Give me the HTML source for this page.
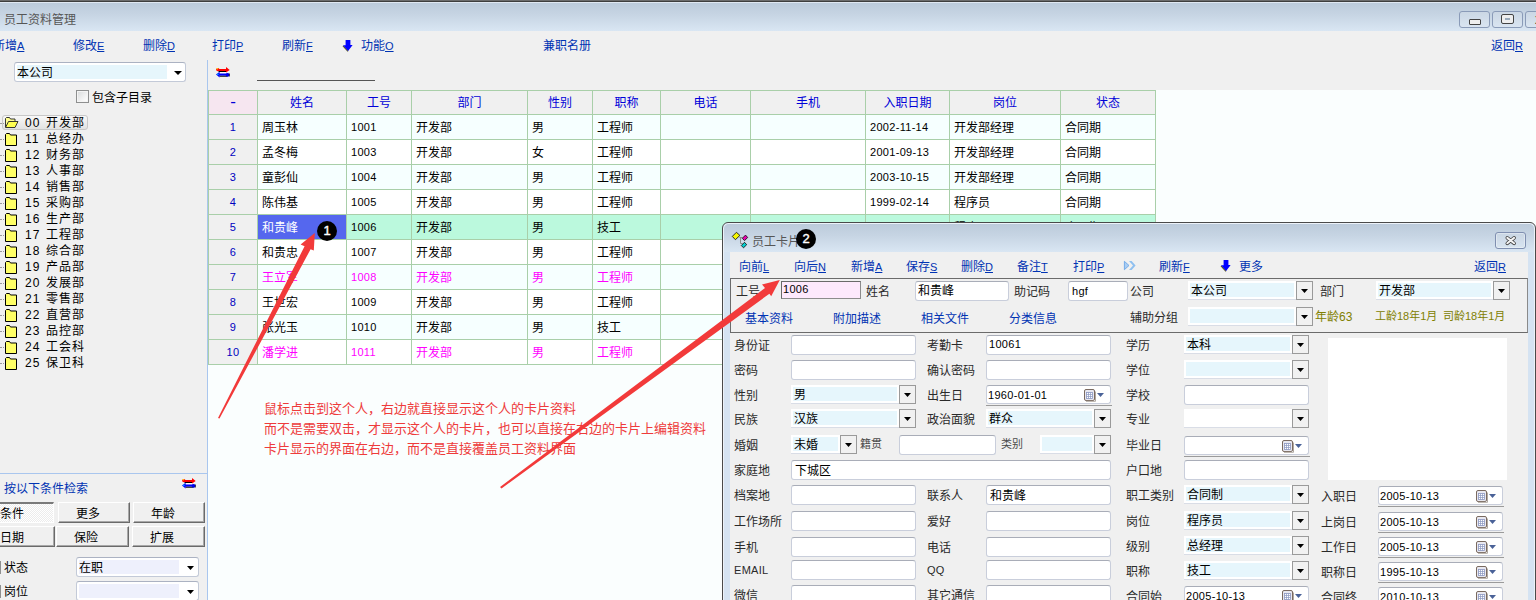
<!DOCTYPE html>
<html lang="zh-CN"><head><meta charset="utf-8"><title>员工资料管理</title>
<style>
html,body{margin:0;padding:0}
body{width:1536px;height:600px;overflow:hidden;position:relative;background:#f0f0f0;
font-family:"Liberation Sans","Noto Sans CJK SC",sans-serif;font-size:12px;line-height:12px;color:#000}
.a{position:absolute}
.t{position:absolute;white-space:nowrap;font-size:12px;line-height:12px}
.t u{text-decoration:underline;text-underline-offset:.5px;text-decoration-thickness:1px;font-size:11px}
.c{text-align:center}
.n{font-size:11px;letter-spacing:.3px}
.y{font-size:13px;line-height:13px}
.tr{letter-spacing:1px}
.tn{display:inline-block;width:21px}
.in{box-sizing:border-box;border:1px solid #c9cedb;border-top-color:#a9adb8;border-radius:3px}
.bd{width:20px;height:20px;border-radius:10px;background:#000;color:#fff;font:13px/20px "Liberation Sans",sans-serif;text-align:center;-webkit-text-stroke:.4px #fff}
svg{display:block;overflow:visible}
</style></head>
<body>
<div class="a " style="left:0px;top:0px;width:1536px;height:1px;background:#6c6c6c"></div>
<div class="a " style="left:0px;top:1px;width:1536px;height:1px;background:#3e3e3e"></div>
<div class="a " style="left:0px;top:2px;width:1536px;height:1px;background:#e0e8f2"></div>
<div class="a " style="left:0px;top:3px;width:1536px;height:28px;background:linear-gradient(#bccbdb,#c6d4e3 40%,#d9e6f3)"></div>
<div class="t" style="left:4px;top:14px;color:#565656;">员工资料管理</div>
<div class="a " style="left:1459px;top:11px;width:31px;height:17px;border:1px solid #8a9bb8;border-radius:3px;box-sizing:border-box;background:rgba(255,255,255,.12)"><div class="a" style="left:9px;top:7px;width:10px;height:4px;border:1px solid #444;border-radius:1px;background:#eee;box-sizing:content-box"></div></div>
<div class="a " style="left:1492px;top:11px;width:31px;height:17px;border:1px solid #8a9bb8;border-radius:3px;box-sizing:border-box;background:rgba(255,255,255,.12)"><div class="a" style="left:9px;top:3px;width:5px;height:2px;border:3px solid #eee;outline:1px solid #444;border-radius:1px;background:#9ab"></div></div>
<div class="a " style="left:1525px;top:11px;width:31px;height:17px;border:1px solid #8a9bb8;border-radius:3px;box-sizing:border-box;background:rgba(255,255,255,.12)"><div class="a" style="left:9px;top:3px;font:bold 11px/11px 'Liberation Sans',sans-serif;color:#333">X</div></div>
<div class="t" style="left:-7px;top:40px;color:#0033b3;">新增<u>A</u></div>
<div class="t" style="left:73px;top:40px;color:#0033b3;">修改<u>E</u></div>
<div class="t" style="left:143px;top:40px;color:#0033b3;">删除<u>D</u></div>
<div class="t" style="left:212px;top:40px;color:#0033b3;">打印<u>P</u></div>
<div class="t" style="left:282px;top:40px;color:#0033b3;">刷新<u>F</u></div>
<svg class="a" style="left:343px;top:40px" width="11" height="12" viewBox="0 0 11 12"><path d="M0 5.800l5 5.600" stroke="#5a5a20" stroke-width="1.200" fill="none"/><path d="M2.600 0h4.800v5h2.200L5.100 11 0 5.200h2.600z" fill="#0000ff"/></svg>
<div class="t" style="left:361px;top:40px;color:#0033b3;">功能<u>O</u></div>
<div class="t" style="left:543px;top:40px;color:#0033b3;">兼职名册</div>
<div class="t" style="left:1491px;top:40px;color:#0033b3;">返回<u>R</u></div>
<div class="a " style="left:14px;top:62px;width:172px;height:20px;background:#fff;border:1px solid #c3cad8;border-top-color:#abb2c2;border-radius:3px;box-sizing:border-box"></div>
<div class="a " style="left:17px;top:65px;width:150px;height:14px;background:#e6f6fc"></div>
<div class="t" style="left:17px;top:67px;">本公司</div>
<svg class="a" style="left:174px;top:71px" width="8" height="4" viewBox="0 0 8 4"><path d="M0 0h8L4 4z" fill="#000"/></svg>
<div class="a " style="left:76px;top:90px;width:13px;height:13px;box-sizing:border-box;border:1px solid #8e8f8f;background:linear-gradient(135deg,#d8dadb,#f6f6f6 70%,#fff);box-shadow:inset 0 0 0 1px #f4f4f4"></div>
<div class="t" style="left:92px;top:92px;">包含子目录</div>
<div class="a " style="left:2px;top:115px;width:86px;height:15px;border:1px solid #c8c8c8;border-radius:3px;box-sizing:border-box;background:linear-gradient(#f8f8f8,#e2e2e2)"></div>
<div class="a" style="left:0;top:123px;width:4px;height:0;border-top:1px dotted #9a9a9a"></div>
<svg class="a" style="left:5px;top:117px" width="14" height="12" viewBox="0 0 14 12"><path d="M.5 10V1.500l1-1h3l1 1.500h4.500v2" fill="#ffff90" stroke="#222" stroke-width=".9"/><path d="M.5 10.500l3-6h9.500l-3 6z" fill="#ffff50" stroke="#222" stroke-width=".9" stroke-linejoin="round"/></svg>
<div class="t tr" style="left:25px;top:117px;"><span class="tn">00</span>开发部</div>
<div class="a" style="left:0;top:139px;width:4px;height:0;border-top:1px dotted #9a9a9a"></div>
<svg class="a" style="left:5px;top:133px" width="13" height="13" viewBox="0 0 13 13"><path d="M.5 12.5V1.5l1-1h3l1 1.5h6v10.5z" fill="#ffff66" stroke="#000"/></svg>
<div class="t tr" style="left:25px;top:133px;"><span class="tn">11</span>总经办</div>
<div class="a" style="left:0;top:155px;width:4px;height:0;border-top:1px dotted #9a9a9a"></div>
<svg class="a" style="left:5px;top:149px" width="13" height="13" viewBox="0 0 13 13"><path d="M.5 12.5V1.5l1-1h3l1 1.5h6v10.5z" fill="#ffff66" stroke="#000"/></svg>
<div class="t tr" style="left:25px;top:149px;"><span class="tn">12</span>财务部</div>
<div class="a" style="left:0;top:171px;width:4px;height:0;border-top:1px dotted #9a9a9a"></div>
<svg class="a" style="left:5px;top:165px" width="13" height="13" viewBox="0 0 13 13"><path d="M.5 12.5V1.5l1-1h3l1 1.5h6v10.5z" fill="#ffff66" stroke="#000"/></svg>
<div class="t tr" style="left:25px;top:165px;"><span class="tn">13</span>人事部</div>
<div class="a" style="left:0;top:187px;width:4px;height:0;border-top:1px dotted #9a9a9a"></div>
<svg class="a" style="left:5px;top:181px" width="13" height="13" viewBox="0 0 13 13"><path d="M.5 12.5V1.5l1-1h3l1 1.5h6v10.5z" fill="#ffff66" stroke="#000"/></svg>
<div class="t tr" style="left:25px;top:181px;"><span class="tn">14</span>销售部</div>
<div class="a" style="left:0;top:203px;width:4px;height:0;border-top:1px dotted #9a9a9a"></div>
<svg class="a" style="left:5px;top:197px" width="13" height="13" viewBox="0 0 13 13"><path d="M.5 12.5V1.5l1-1h3l1 1.5h6v10.5z" fill="#ffff66" stroke="#000"/></svg>
<div class="t tr" style="left:25px;top:197px;"><span class="tn">15</span>采购部</div>
<div class="a" style="left:0;top:219px;width:4px;height:0;border-top:1px dotted #9a9a9a"></div>
<svg class="a" style="left:5px;top:213px" width="13" height="13" viewBox="0 0 13 13"><path d="M.5 12.5V1.5l1-1h3l1 1.5h6v10.5z" fill="#ffff66" stroke="#000"/></svg>
<div class="t tr" style="left:25px;top:213px;"><span class="tn">16</span>生产部</div>
<div class="a" style="left:0;top:235px;width:4px;height:0;border-top:1px dotted #9a9a9a"></div>
<svg class="a" style="left:5px;top:229px" width="13" height="13" viewBox="0 0 13 13"><path d="M.5 12.5V1.5l1-1h3l1 1.5h6v10.5z" fill="#ffff66" stroke="#000"/></svg>
<div class="t tr" style="left:25px;top:229px;"><span class="tn">17</span>工程部</div>
<div class="a" style="left:0;top:251px;width:4px;height:0;border-top:1px dotted #9a9a9a"></div>
<svg class="a" style="left:5px;top:245px" width="13" height="13" viewBox="0 0 13 13"><path d="M.5 12.5V1.5l1-1h3l1 1.5h6v10.5z" fill="#ffff66" stroke="#000"/></svg>
<div class="t tr" style="left:25px;top:245px;"><span class="tn">18</span>综合部</div>
<div class="a" style="left:0;top:267px;width:4px;height:0;border-top:1px dotted #9a9a9a"></div>
<svg class="a" style="left:5px;top:261px" width="13" height="13" viewBox="0 0 13 13"><path d="M.5 12.5V1.5l1-1h3l1 1.5h6v10.5z" fill="#ffff66" stroke="#000"/></svg>
<div class="t tr" style="left:25px;top:261px;"><span class="tn">19</span>产品部</div>
<div class="a" style="left:0;top:283px;width:4px;height:0;border-top:1px dotted #9a9a9a"></div>
<svg class="a" style="left:5px;top:277px" width="13" height="13" viewBox="0 0 13 13"><path d="M.5 12.5V1.5l1-1h3l1 1.5h6v10.5z" fill="#ffff66" stroke="#000"/></svg>
<div class="t tr" style="left:25px;top:277px;"><span class="tn">20</span>发展部</div>
<div class="a" style="left:0;top:299px;width:4px;height:0;border-top:1px dotted #9a9a9a"></div>
<svg class="a" style="left:5px;top:293px" width="13" height="13" viewBox="0 0 13 13"><path d="M.5 12.5V1.5l1-1h3l1 1.5h6v10.5z" fill="#ffff66" stroke="#000"/></svg>
<div class="t tr" style="left:25px;top:293px;"><span class="tn">21</span>零售部</div>
<div class="a" style="left:0;top:315px;width:4px;height:0;border-top:1px dotted #9a9a9a"></div>
<svg class="a" style="left:5px;top:309px" width="13" height="13" viewBox="0 0 13 13"><path d="M.5 12.5V1.5l1-1h3l1 1.5h6v10.5z" fill="#ffff66" stroke="#000"/></svg>
<div class="t tr" style="left:25px;top:309px;"><span class="tn">22</span>直营部</div>
<div class="a" style="left:0;top:331px;width:4px;height:0;border-top:1px dotted #9a9a9a"></div>
<svg class="a" style="left:5px;top:325px" width="13" height="13" viewBox="0 0 13 13"><path d="M.5 12.5V1.5l1-1h3l1 1.5h6v10.5z" fill="#ffff66" stroke="#000"/></svg>
<div class="t tr" style="left:25px;top:325px;"><span class="tn">23</span>品控部</div>
<div class="a" style="left:0;top:347px;width:4px;height:0;border-top:1px dotted #9a9a9a"></div>
<svg class="a" style="left:5px;top:341px" width="13" height="13" viewBox="0 0 13 13"><path d="M.5 12.5V1.5l1-1h3l1 1.5h6v10.5z" fill="#ffff66" stroke="#000"/></svg>
<div class="t tr" style="left:25px;top:341px;"><span class="tn">24</span>工会科</div>
<div class="a" style="left:0;top:363px;width:4px;height:0;border-top:1px dotted #9a9a9a"></div>
<svg class="a" style="left:5px;top:357px" width="13" height="13" viewBox="0 0 13 13"><path d="M.5 12.5V1.5l1-1h3l1 1.5h6v10.5z" fill="#ffff66" stroke="#000"/></svg>
<div class="t tr" style="left:25px;top:357px;"><span class="tn">25</span>保卫科</div>
<div class="a " style="left:207px;top:60px;width:1px;height:540px;background:#a9c6ee"></div>
<div class="a " style="left:0px;top:473px;width:207px;height:1px;background:#a9c6ee"></div>
<div class="t" style="left:4px;top:483px;color:#0033b3;">按以下条件检索</div>
<svg class="a" style="left:182px;top:478px" width="14" height="11" viewBox="0 0 14 11"><rect x="2.500" y="4" width="8.500" height="1" fill="#000"/><rect x="3" y="5" width="7.500" height="1.500" fill="#fff"/><rect x="3.500" y="8.500" width="8" height="1.200" fill="#000"/><circle cx="1.800" cy="2.600" r="1.700" fill="#ff0000"/><rect x="1" y="2" width="10" height="2" fill="#ff0000"/><path d="M10 0l3.700 2.900L10 5.600z" fill="#ff0000"/><path d="M3.600 4.800L0 7.500l3.600 3z" fill="#0000ff"/><rect x="2.500" y="6.500" width="9" height="2" fill="#0000ff"/><circle cx="11.600" cy="7.800" r="1.900" fill="#0000ee"/><path d="M13.300 6.500v3" stroke="#000" stroke-width=".8"/><circle cx="1.300" cy="1.700" r=".7" fill="#ffee00"/><circle cx="1.900" cy="7.300" r=".7" fill="#00e0ff"/></svg>
<div class="a " style="left:-20px;top:502px;width:74px;height:21px;box-sizing:border-box;border:1px solid;border-top-width:2px;border-color:#7a7a7a #fff #fff #7a7a7a;background:repeating-conic-gradient(#fff 0 25%,#ececec 0 50%) 0 0/2px 2px"></div>
<div class="t" style="left:0px;top:508px;">条件</div>
<div class="a " style="left:58px;top:502px;width:72px;height:21px;box-sizing:border-box;border:1px solid;border-color:#fff #6a6a6a #6a6a6a #fff;box-shadow:inset -1px -1px 0 #a8a8a8;background:#f0f0f0"></div>
<div class="t" style="left:76px;top:508px;">更多</div>
<div class="a " style="left:133px;top:502px;width:72px;height:21px;box-sizing:border-box;border:1px solid;border-color:#fff #6a6a6a #6a6a6a #fff;box-shadow:inset -1px -1px 0 #a8a8a8;background:#f0f0f0"></div>
<div class="t" style="left:151px;top:508px;">年龄</div>
<div class="a " style="left:-18px;top:526px;width:73px;height:21px;box-sizing:border-box;border:1px solid;border-color:#fff #6a6a6a #6a6a6a #fff;box-shadow:inset -1px -1px 0 #a8a8a8;background:#f0f0f0"></div>
<div class="t" style="left:0px;top:532px;">日期</div>
<div class="a " style="left:56px;top:526px;width:73px;height:21px;box-sizing:border-box;border:1px solid;border-color:#fff #6a6a6a #6a6a6a #fff;box-shadow:inset -1px -1px 0 #a8a8a8;background:#f0f0f0"></div>
<div class="t" style="left:74px;top:532px;">保险</div>
<div class="a " style="left:132px;top:526px;width:73px;height:21px;box-sizing:border-box;border:1px solid;border-color:#fff #6a6a6a #6a6a6a #fff;box-shadow:inset -1px -1px 0 #a8a8a8;background:#f0f0f0"></div>
<div class="t" style="left:150px;top:532px;">扩展</div>
<div class="a " style="left:-12px;top:561px;width:13px;height:13px;box-sizing:border-box;border:1px solid #8e8f8f;background:#f4f4f4"></div>
<div class="t" style="left:4px;top:562px;">状态</div>
<div class="a " style="left:76px;top:557px;width:123px;height:20px;background:#fff;border:1px solid #c3cad8;border-top-color:#abb2c2;border-radius:3px;box-sizing:border-box"></div>
<div class="a " style="left:79px;top:560px;width:100px;height:14px;background:#eef0fc"></div>
<div class="t" style="left:79px;top:562px;">在职</div>
<svg class="a" style="left:187px;top:566px" width="7" height="4" viewBox="0 0 7 4"><path d="M0 0h7L3.5 4z" fill="#000"/></svg>
<div class="a " style="left:-12px;top:585px;width:13px;height:13px;box-sizing:border-box;border:1px solid #8e8f8f;background:#f4f4f4"></div>
<div class="t" style="left:4px;top:586px;">岗位</div>
<div class="a " style="left:76px;top:581px;width:123px;height:20px;background:#fff;border:1px solid #c3cad8;border-top-color:#abb2c2;border-radius:3px;box-sizing:border-box"></div>
<div class="a " style="left:79px;top:584px;width:100px;height:14px;background:#eef0fc"></div>
<svg class="a" style="left:187px;top:590px" width="7" height="4" viewBox="0 0 7 4"><path d="M0 0h7L3.5 4z" fill="#000"/></svg>
<div class="a " style="left:208px;top:90px;width:1328px;height:510px;background:#fafefe"></div>
<svg class="a" style="left:216px;top:67px" width="14" height="11" viewBox="0 0 14 11"><rect x="2.500" y="4" width="8.500" height="1" fill="#000"/><rect x="3" y="5" width="7.500" height="1.500" fill="#fff"/><rect x="3.500" y="8.500" width="8" height="1.200" fill="#000"/><circle cx="1.800" cy="2.600" r="1.700" fill="#ff0000"/><rect x="1" y="2" width="10" height="2" fill="#ff0000"/><path d="M10 0l3.700 2.900L10 5.600z" fill="#ff0000"/><path d="M3.600 4.800L0 7.500l3.600 3z" fill="#0000ff"/><rect x="2.500" y="6.500" width="9" height="2" fill="#0000ff"/><circle cx="11.600" cy="7.800" r="1.900" fill="#0000ee"/><path d="M13.300 6.500v3" stroke="#000" stroke-width=".8"/><circle cx="1.300" cy="1.700" r=".7" fill="#ffee00"/><circle cx="1.900" cy="7.300" r=".7" fill="#00e0ff"/></svg>
<div class="a " style="left:257px;top:80px;width:118px;height:1px;background:#555"></div>
<div class="a " style="left:208px;top:90px;width:948px;height:25px;background:#f0f0f0"></div>
<div class="a " style="left:209px;top:91px;width:48px;height:23px;background:#f6e6f0"></div>
<div class="a " style="left:257px;top:114px;width:898px;height:25px;background:#f6ffff"></div>
<div class="a " style="left:208px;top:114px;width:49px;height:25px;background:#f0f0f0"></div>
<div class="a " style="left:257px;top:139px;width:898px;height:25px;background:#ffffff"></div>
<div class="a " style="left:208px;top:139px;width:49px;height:25px;background:#f0f0f0"></div>
<div class="a " style="left:257px;top:164px;width:898px;height:25px;background:#f6ffff"></div>
<div class="a " style="left:208px;top:164px;width:49px;height:25px;background:#f0f0f0"></div>
<div class="a " style="left:257px;top:189px;width:898px;height:25px;background:#ffffff"></div>
<div class="a " style="left:208px;top:189px;width:49px;height:25px;background:#f0f0f0"></div>
<div class="a " style="left:257px;top:214px;width:898px;height:25px;background:#bbf9dd"></div>
<div class="a " style="left:208px;top:214px;width:49px;height:25px;background:#f0f0f0"></div>
<div class="a " style="left:257px;top:239px;width:898px;height:25px;background:#ffffff"></div>
<div class="a " style="left:208px;top:239px;width:49px;height:25px;background:#f0f0f0"></div>
<div class="a " style="left:257px;top:264px;width:898px;height:25px;background:#f6ffff"></div>
<div class="a " style="left:208px;top:264px;width:49px;height:25px;background:#f0f0f0"></div>
<div class="a " style="left:257px;top:289px;width:898px;height:25px;background:#ffffff"></div>
<div class="a " style="left:208px;top:289px;width:49px;height:25px;background:#f0f0f0"></div>
<div class="a " style="left:257px;top:314px;width:898px;height:25px;background:#f6ffff"></div>
<div class="a " style="left:208px;top:314px;width:49px;height:25px;background:#f0f0f0"></div>
<div class="a " style="left:257px;top:339px;width:898px;height:25px;background:#ffffff"></div>
<div class="a " style="left:208px;top:339px;width:49px;height:25px;background:#f0f0f0"></div>
<div class="a " style="left:258px;top:215px;width:88px;height:24px;background:#5567ee"></div>
<div class="a " style="left:208px;top:90px;width:1px;height:275px;background:#a9cfa9"></div>
<div class="a " style="left:257px;top:90px;width:1px;height:275px;background:#a9cfa9"></div>
<div class="a " style="left:346px;top:90px;width:1px;height:275px;background:#a9cfa9"></div>
<div class="a " style="left:411px;top:90px;width:1px;height:275px;background:#a9cfa9"></div>
<div class="a " style="left:527px;top:90px;width:1px;height:275px;background:#a9cfa9"></div>
<div class="a " style="left:592px;top:90px;width:1px;height:275px;background:#a9cfa9"></div>
<div class="a " style="left:660px;top:90px;width:1px;height:275px;background:#a9cfa9"></div>
<div class="a " style="left:750px;top:90px;width:1px;height:275px;background:#a9cfa9"></div>
<div class="a " style="left:865px;top:90px;width:1px;height:275px;background:#a9cfa9"></div>
<div class="a " style="left:949px;top:90px;width:1px;height:275px;background:#a9cfa9"></div>
<div class="a " style="left:1060px;top:90px;width:1px;height:275px;background:#a9cfa9"></div>
<div class="a " style="left:1155px;top:90px;width:1px;height:275px;background:#a9cfa9"></div>
<div class="a " style="left:208px;top:90px;width:948px;height:1px;background:#a9cfa9"></div>
<div class="a " style="left:208px;top:114px;width:948px;height:1px;background:#a9cfa9"></div>
<div class="a " style="left:208px;top:139px;width:948px;height:1px;background:#a9cfa9"></div>
<div class="a " style="left:208px;top:164px;width:948px;height:1px;background:#a9cfa9"></div>
<div class="a " style="left:208px;top:189px;width:948px;height:1px;background:#a9cfa9"></div>
<div class="a " style="left:208px;top:214px;width:948px;height:1px;background:#a9cfa9"></div>
<div class="a " style="left:208px;top:239px;width:948px;height:1px;background:#a9cfa9"></div>
<div class="a " style="left:208px;top:264px;width:948px;height:1px;background:#a9cfa9"></div>
<div class="a " style="left:208px;top:289px;width:948px;height:1px;background:#a9cfa9"></div>
<div class="a " style="left:208px;top:314px;width:948px;height:1px;background:#a9cfa9"></div>
<div class="a " style="left:208px;top:339px;width:948px;height:1px;background:#a9cfa9"></div>
<div class="a " style="left:208px;top:364px;width:948px;height:1px;background:#a9cfa9"></div>
<div class="t c" style="left:208px;top:93px;width:50px;color:#0000d8;font-size:17px;line-height:17px;font-weight:300">-</div>
<div class="t c" style="left:257px;top:97px;color:#0000d8;width:90px;">姓名</div>
<div class="t c" style="left:346px;top:97px;color:#0000d8;width:66px;">工号</div>
<div class="t c" style="left:411px;top:97px;color:#0000d8;width:117px;">部门</div>
<div class="t c" style="left:527px;top:97px;color:#0000d8;width:66px;">性别</div>
<div class="t c" style="left:592px;top:97px;color:#0000d8;width:69px;">职称</div>
<div class="t c" style="left:660px;top:97px;color:#0000d8;width:91px;">电话</div>
<div class="t c" style="left:750px;top:97px;color:#0000d8;width:116px;">手机</div>
<div class="t c" style="left:865px;top:97px;color:#0000d8;width:85px;">入职日期</div>
<div class="t c" style="left:949px;top:97px;color:#0000d8;width:112px;">岗位</div>
<div class="t c" style="left:1060px;top:97px;color:#0000d8;width:96px;">状态</div>
<div class="t c n" style="left:208px;top:121px;color:#0000c0;width:50px;">1</div>
<div class="t" style="left:262px;top:122px;color:#000;">周玉林</div>
<div class="t n" style="left:351px;top:121px;color:#000;">1001</div>
<div class="t" style="left:416px;top:122px;color:#000;">开发部</div>
<div class="t" style="left:532px;top:122px;color:#000;">男</div>
<div class="t" style="left:597px;top:122px;color:#000;">工程师</div>
<div class="t n" style="left:870px;top:121px;color:#000;">2002-11-14</div>
<div class="t" style="left:954px;top:122px;color:#000;">开发部经理</div>
<div class="t" style="left:1065px;top:122px;color:#000;">合同期</div>
<div class="t c n" style="left:208px;top:146px;color:#0000c0;width:50px;">2</div>
<div class="t" style="left:262px;top:147px;color:#000;">孟冬梅</div>
<div class="t n" style="left:351px;top:146px;color:#000;">1003</div>
<div class="t" style="left:416px;top:147px;color:#000;">开发部</div>
<div class="t" style="left:532px;top:147px;color:#000;">女</div>
<div class="t" style="left:597px;top:147px;color:#000;">工程师</div>
<div class="t n" style="left:870px;top:146px;color:#000;">2001-09-13</div>
<div class="t" style="left:954px;top:147px;color:#000;">开发部经理</div>
<div class="t" style="left:1065px;top:147px;color:#000;">合同期</div>
<div class="t c n" style="left:208px;top:171px;color:#0000c0;width:50px;">3</div>
<div class="t" style="left:262px;top:172px;color:#000;">童彭仙</div>
<div class="t n" style="left:351px;top:171px;color:#000;">1004</div>
<div class="t" style="left:416px;top:172px;color:#000;">开发部</div>
<div class="t" style="left:532px;top:172px;color:#000;">男</div>
<div class="t" style="left:597px;top:172px;color:#000;">工程师</div>
<div class="t n" style="left:870px;top:171px;color:#000;">2003-10-15</div>
<div class="t" style="left:954px;top:172px;color:#000;">开发部经理</div>
<div class="t" style="left:1065px;top:172px;color:#000;">合同期</div>
<div class="t c n" style="left:208px;top:196px;color:#0000c0;width:50px;">4</div>
<div class="t" style="left:262px;top:197px;color:#000;">陈伟基</div>
<div class="t n" style="left:351px;top:196px;color:#000;">1005</div>
<div class="t" style="left:416px;top:197px;color:#000;">开发部</div>
<div class="t" style="left:532px;top:197px;color:#000;">男</div>
<div class="t" style="left:597px;top:197px;color:#000;">工程师</div>
<div class="t n" style="left:870px;top:196px;color:#000;">1999-02-14</div>
<div class="t" style="left:954px;top:197px;color:#000;">程序员</div>
<div class="t" style="left:1065px;top:197px;color:#000;">合同期</div>
<div class="t c n" style="left:208px;top:221px;color:#0000c0;width:50px;">5</div>
<div class="t" style="left:262px;top:222px;color:#fff;">和贵峰</div>
<div class="t n" style="left:351px;top:221px;color:#000;">1006</div>
<div class="t" style="left:416px;top:222px;color:#000;">开发部</div>
<div class="t" style="left:532px;top:222px;color:#000;">男</div>
<div class="t" style="left:597px;top:222px;color:#000;">技工</div>
<div class="t n" style="left:870px;top:221px;color:#000;">2005-10-13</div>
<div class="t" style="left:954px;top:222px;color:#000;">程序员</div>
<div class="t" style="left:1065px;top:222px;color:#000;">合同期</div>
<div class="t c n" style="left:208px;top:246px;color:#0000c0;width:50px;">6</div>
<div class="t" style="left:262px;top:247px;color:#000;">和贵忠</div>
<div class="t n" style="left:351px;top:246px;color:#000;">1007</div>
<div class="t" style="left:416px;top:247px;color:#000;">开发部</div>
<div class="t" style="left:532px;top:247px;color:#000;">男</div>
<div class="t" style="left:597px;top:247px;color:#000;">工程师</div>
<div class="t c n" style="left:208px;top:271px;color:#0000c0;width:50px;">7</div>
<div class="t" style="left:262px;top:272px;color:#ff00ff;">王立军</div>
<div class="t n" style="left:351px;top:271px;color:#ff00ff;">1008</div>
<div class="t" style="left:416px;top:272px;color:#ff00ff;">开发部</div>
<div class="t" style="left:532px;top:272px;color:#ff00ff;">男</div>
<div class="t" style="left:597px;top:272px;color:#ff00ff;">工程师</div>
<div class="t c n" style="left:208px;top:296px;color:#0000c0;width:50px;">8</div>
<div class="t" style="left:262px;top:297px;color:#000;">王世宏</div>
<div class="t n" style="left:351px;top:296px;color:#000;">1009</div>
<div class="t" style="left:416px;top:297px;color:#000;">开发部</div>
<div class="t" style="left:532px;top:297px;color:#000;">男</div>
<div class="t" style="left:597px;top:297px;color:#000;">工程师</div>
<div class="t c n" style="left:208px;top:321px;color:#0000c0;width:50px;">9</div>
<div class="t" style="left:262px;top:322px;color:#000;">张光玉</div>
<div class="t n" style="left:351px;top:321px;color:#000;">1010</div>
<div class="t" style="left:416px;top:322px;color:#000;">开发部</div>
<div class="t" style="left:532px;top:322px;color:#000;">男</div>
<div class="t" style="left:597px;top:322px;color:#000;">技工</div>
<div class="t c n" style="left:208px;top:346px;color:#0000c0;width:50px;">10</div>
<div class="t" style="left:262px;top:347px;color:#ff00ff;">潘学进</div>
<div class="t n" style="left:351px;top:346px;color:#ff00ff;">1011</div>
<div class="t" style="left:416px;top:347px;color:#ff00ff;">开发部</div>
<div class="t" style="left:532px;top:347px;color:#ff00ff;">男</div>
<div class="t" style="left:597px;top:347px;color:#ff00ff;">工程师</div>
<div class="t y" style="left:264px;top:402px;color:#ee3b3b;">鼠标点击到这个人，右边就直接显示这个人的卡片资料</div>
<div class="t y" style="left:264px;top:422px;color:#ee3b3b;">而不是需要双击，才显示这个人的卡片，也可以直接在右边的卡片上编辑资料</div>
<div class="t y" style="left:264px;top:442px;color:#ee3b3b;">卡片显示的界面在右边，而不是直接覆盖员工资料界面</div>
<svg class="a" style="left:0;top:0" width="1536" height="600" viewBox="0 0 1536 600"><path d="M218 418 L304.6 246.2 L300.6 244.4 L314.8 233 L313.8 250.6 L310.6 249.2 L219.5 418.5z" fill="#f23a3a"/></svg>
<div class="a bd" style="left:317px;top:221px">1</div>
<div class="a " style="left:722px;top:222px;width:814px;height:400px;box-sizing:border-box;border:1px solid #4a4a4a;border-radius:6px 6px 0 0;background:#d5e3f2;overflow:hidden;box-shadow:inset 0 0 0 1px rgba(255,255,255,.55)"><div class="a" style="left:1px;top:1px;width:810px;height:28px;background:linear-gradient(#bccbdb,#c6d4e3 40%,#d9e6f3);border-radius:5px 5px 0 0"></div></div>
<div class="a " style="left:730px;top:252px;width:798px;height:348px;background:#f0f0f0"></div>
<svg class="a" style="left:732px;top:232px" width="17" height="17" viewBox="0 0 17 17"><path d="M7.500 5.500H10.500M8.500 5.500v6H10.500" stroke="#8a8a8a" fill="none"/><path d="M.3 4.400L4.400 .3l3.500 3.100-4.500 4.300z" fill="#f6f600" stroke="#1a1a1a" stroke-width=".9"/><path d="M10.300 6.300l3.200-3.200 2.200 2.400-3.200 3.100z" fill="#e800b0" stroke="#1a1a1a" stroke-width=".9"/><path d="M9.300 13.500l3.200-3.200 2.200 2.400-3.200 3.100z" fill="#00d0d0" stroke="#1a1a1a" stroke-width=".9"/></svg>
<div class="t" style="left:752px;top:236px;color:#565656;">员工卡片</div>
<div class="a " style="left:1495px;top:232px;width:31px;height:17px;border:1px solid #7f8fb0;border-radius:3px;box-sizing:border-box;background:rgba(255,255,255,.1);box-shadow:inset 0 0 0 1px rgba(255,255,255,.35)"><svg class="a" style="left:9px;top:3px" width="12" height="10" viewBox="0 0 12 10"><path d="M2.300 1.900l6.800 5.400M9.100 1.900l-6.800 5.400" stroke="#3c3c3c" stroke-width="3.600" stroke-linecap="round"/><path d="M2.300 1.900l6.800 5.400M9.100 1.900l-6.800 5.400" stroke="#f4f4f4" stroke-width="2" stroke-linecap="round"/></svg></div>
<div class="t" style="left:739px;top:261px;color:#0033b3;">向前<u>L</u></div>
<div class="t" style="left:794px;top:261px;color:#0033b3;">向后<u>N</u></div>
<div class="t" style="left:851px;top:261px;color:#0033b3;">新增<u>A</u></div>
<div class="t" style="left:906px;top:261px;color:#0033b3;">保存<u>S</u></div>
<div class="t" style="left:961px;top:261px;color:#0033b3;">删除<u>D</u></div>
<div class="t" style="left:1017px;top:261px;color:#0033b3;">备注<u>T</u></div>
<div class="t" style="left:1073px;top:261px;color:#0033b3;">打印<u>P</u></div>
<div class="t" style="left:1159px;top:261px;color:#0033b3;">刷新<u>F</u></div>
<svg class="a" style="left:1124px;top:261px" width="12" height="9" viewBox="0 0 12 9"><path d="M.4 .3L5 4.500 .4 8.700z" fill="#a9cdf3" stroke="#5f9fe6" stroke-width=".8"/><path d="M5 0h2.600L11.600 4.500 7.600 9H5l4-4.500z" fill="#8fc0f0"/></svg>
<svg class="a" style="left:1221px;top:260px" width="11" height="12" viewBox="0 0 11 12"><path d="M0 5.800l5 5.600" stroke="#5a5a20" stroke-width="1.200" fill="none"/><path d="M2.600 0h4.800v5h2.200L5.100 11 0 5.200h2.600z" fill="#0000ff"/></svg>
<div class="t" style="left:1239px;top:261px;color:#0033b3;">更多</div>
<div class="t" style="left:1474px;top:261px;color:#0033b3;">返回<u>R</u></div>
<div class="a " style="left:730px;top:278px;width:798px;height:55px;box-sizing:border-box;border:1px solid #6b6b6b;border-right-color:#8a8a8a"></div>
<div class="t" style="left:736px;top:286px;color:#2a2a2a;">工号</div>
<div class="a " style="left:781px;top:281px;width:80px;height:18px;box-sizing:border-box;border:1px solid #6a6a6a;border-right-color:#8c8c8c;border-bottom-color:#8c8c8c;background:#fde9fc"></div>
<div class="t n" style="left:783px;top:283px;">1006</div>
<div class="t" style="left:866px;top:286px;color:#2a2a2a;">姓名</div>
<div class="a in" style="left:915px;top:281px;width:94px;height:20px;background:#fff;"></div>
<div class="t" style="left:918px;top:285px;">和贵峰</div>
<div class="t" style="left:1014px;top:286px;color:#2a2a2a;">助记码</div>
<div class="a in" style="left:1068px;top:281px;width:60px;height:20px;background:#fff;"></div>
<div class="t n" style="left:1072px;top:285px;">hgf</div>
<div class="t" style="left:1130px;top:286px;color:#2a2a2a;">公司</div>
<div class="a " style="left:1188px;top:281px;width:125px;height:19px;background:#fff;border-bottom:1px solid #d9dde6;box-sizing:border-box"></div>
<div class="a " style="left:1190px;top:283px;width:104px;height:14px;background:#e6f6fc"></div>
<div class="a " style="left:1296px;top:281px;width:17px;height:19px;box-sizing:border-box;border:1px solid #9a9a9a;background:#f1f1f1"></div>
<svg class="a" style="left:1301px;top:289px" width="7" height="4" viewBox="0 0 7 4"><path d="M0 0h7L3.5 4z" fill="#000"/></svg>
<div class="t" style="left:1191px;top:285px;">本公司</div>
<div class="t" style="left:1320px;top:286px;color:#2a2a2a;">部门</div>
<div class="a " style="left:1376px;top:281px;width:134px;height:19px;background:#fff;border-bottom:1px solid #d9dde6;box-sizing:border-box"></div>
<div class="a " style="left:1378px;top:283px;width:113px;height:14px;background:#e6f6fc"></div>
<div class="a " style="left:1493px;top:281px;width:17px;height:19px;box-sizing:border-box;border:1px solid #9a9a9a;background:#f1f1f1"></div>
<svg class="a" style="left:1498px;top:289px" width="7" height="4" viewBox="0 0 7 4"><path d="M0 0h7L3.5 4z" fill="#000"/></svg>
<div class="t" style="left:1379px;top:285px;">开发部</div>
<div class="t" style="left:745px;top:313px;color:#0033b3;">基本资料</div>
<div class="t" style="left:833px;top:313px;color:#0033b3;">附加描述</div>
<div class="t" style="left:921px;top:313px;color:#0033b3;">相关文件</div>
<div class="t" style="left:1009px;top:313px;color:#0033b3;">分类信息</div>
<div class="t" style="left:1130px;top:312px;color:#2a2a2a;">辅助分组</div>
<div class="a " style="left:1188px;top:307px;width:125px;height:19px;background:#fff;border-bottom:1px solid #d9dde6;box-sizing:border-box"></div>
<div class="a " style="left:1190px;top:309px;width:104px;height:14px;background:#e6f6fc"></div>
<div class="a " style="left:1296px;top:307px;width:17px;height:19px;box-sizing:border-box;border:1px solid #9a9a9a;background:#f1f1f1"></div>
<svg class="a" style="left:1301px;top:315px" width="7" height="4" viewBox="0 0 7 4"><path d="M0 0h7L3.5 4z" fill="#000"/></svg>
<div class="t" style="left:1315px;top:311px;color:#808000;">年龄63</div>
<div class="t" style="left:1375px;top:311px;color:#808000;font-size:11px;line-height:11px;">工龄18年1月</div>
<div class="t" style="left:1443px;top:311px;color:#808000;font-size:11px;line-height:11px;">司龄18年1月</div>
<div class="t" style="left:734px;top:340px;color:#2a2a2a;">身份证</div>
<div class="t" style="left:734px;top:365px;color:#2a2a2a;">密码</div>
<div class="t" style="left:734px;top:390px;color:#2a2a2a;">性别</div>
<div class="t" style="left:734px;top:414px;color:#2a2a2a;">民族</div>
<div class="t" style="left:734px;top:440px;color:#2a2a2a;">婚姻</div>
<div class="t" style="left:734px;top:465px;color:#2a2a2a;">家庭地</div>
<div class="t" style="left:734px;top:490px;color:#2a2a2a;">档案地</div>
<div class="t" style="left:734px;top:516px;color:#2a2a2a;">工作场所</div>
<div class="t" style="left:734px;top:542px;color:#2a2a2a;">手机</div>
<div class="t n" style="left:734px;top:564px;color:#2a2a2a;">EMAIL</div>
<div class="t" style="left:734px;top:590px;color:#2a2a2a;">微信</div>
<div class="t" style="left:927px;top:340px;color:#2a2a2a;">考勤卡</div>
<div class="t" style="left:927px;top:365px;color:#2a2a2a;">确认密码</div>
<div class="t" style="left:927px;top:390px;color:#2a2a2a;">出生日</div>
<div class="t" style="left:927px;top:414px;color:#2a2a2a;">政治面貌</div>
<div class="t" style="left:927px;top:490px;color:#2a2a2a;">联系人</div>
<div class="t" style="left:927px;top:516px;color:#2a2a2a;">爱好</div>
<div class="t" style="left:927px;top:542px;color:#2a2a2a;">电话</div>
<div class="t n" style="left:927px;top:564px;color:#2a2a2a;">QQ</div>
<div class="t" style="left:927px;top:590px;color:#2a2a2a;">其它通信</div>
<div class="t" style="left:1126px;top:340px;color:#2a2a2a;">学历</div>
<div class="t" style="left:1126px;top:365px;color:#2a2a2a;">学位</div>
<div class="t" style="left:1126px;top:390px;color:#2a2a2a;">学校</div>
<div class="t" style="left:1126px;top:414px;color:#2a2a2a;">专业</div>
<div class="t" style="left:1126px;top:440px;color:#2a2a2a;">毕业日</div>
<div class="t" style="left:1126px;top:465px;color:#2a2a2a;">户口地</div>
<div class="t" style="left:1126px;top:490px;color:#2a2a2a;">职工类别</div>
<div class="t" style="left:1126px;top:516px;color:#2a2a2a;">岗位</div>
<div class="t" style="left:1126px;top:541px;color:#2a2a2a;">级别</div>
<div class="t" style="left:1126px;top:566px;color:#2a2a2a;">职称</div>
<div class="t" style="left:1126px;top:591px;color:#2a2a2a;">合同始</div>
<div class="a in" style="left:791px;top:335px;width:125px;height:20px;background:#fff;"></div>
<div class="a in" style="left:791px;top:360px;width:125px;height:20px;background:#fff;"></div>
<div class="a " style="left:791px;top:385px;width:125px;height:19px;background:#fff;border-bottom:1px solid #d9dde6;box-sizing:border-box"></div>
<div class="a " style="left:793px;top:387px;width:104px;height:14px;background:#e6f6fc"></div>
<div class="a " style="left:899px;top:385px;width:17px;height:19px;box-sizing:border-box;border:1px solid #9a9a9a;background:#f1f1f1"></div>
<svg class="a" style="left:904px;top:393px" width="7" height="4" viewBox="0 0 7 4"><path d="M0 0h7L3.5 4z" fill="#000"/></svg>
<div class="t" style="left:794px;top:389px;">男</div>
<div class="a " style="left:791px;top:409px;width:125px;height:19px;background:#fff;border-bottom:1px solid #d9dde6;box-sizing:border-box"></div>
<div class="a " style="left:793px;top:411px;width:104px;height:14px;background:#e6f6fc"></div>
<div class="a " style="left:899px;top:409px;width:17px;height:19px;box-sizing:border-box;border:1px solid #9a9a9a;background:#f1f1f1"></div>
<svg class="a" style="left:904px;top:417px" width="7" height="4" viewBox="0 0 7 4"><path d="M0 0h7L3.5 4z" fill="#000"/></svg>
<div class="t" style="left:794px;top:413px;">汉族</div>
<div class="a " style="left:791px;top:435px;width:66px;height:19px;background:#fff;border-bottom:1px solid #d9dde6;box-sizing:border-box"></div>
<div class="a " style="left:793px;top:437px;width:45px;height:14px;background:#e6f6fc"></div>
<div class="a " style="left:840px;top:435px;width:17px;height:19px;box-sizing:border-box;border:1px solid #9a9a9a;background:#f1f1f1"></div>
<svg class="a" style="left:845px;top:443px" width="7" height="4" viewBox="0 0 7 4"><path d="M0 0h7L3.5 4z" fill="#000"/></svg>
<div class="t" style="left:794px;top:439px;">未婚</div>
<div class="t" style="left:860px;top:439px;color:#4a4a4a;font-size:11px;line-height:11px;">籍贯</div>
<div class="a in" style="left:899px;top:435px;width:97px;height:20px;background:#fff;"></div>
<div class="t" style="left:1001px;top:439px;color:#4a4a4a;font-size:11px;line-height:11px;">类别</div>
<div class="a " style="left:1040px;top:435px;width:71px;height:19px;background:#fff;border-bottom:1px solid #d9dde6;box-sizing:border-box"></div>
<div class="a " style="left:1042px;top:437px;width:50px;height:14px;background:#e6f6fc"></div>
<div class="a " style="left:1094px;top:435px;width:17px;height:19px;box-sizing:border-box;border:1px solid #9a9a9a;background:#f1f1f1"></div>
<svg class="a" style="left:1099px;top:443px" width="7" height="4" viewBox="0 0 7 4"><path d="M0 0h7L3.5 4z" fill="#000"/></svg>
<div class="a in" style="left:791px;top:460px;width:320px;height:20px;background:#fff;"></div>
<div class="t" style="left:795px;top:465px;">下城区</div>
<div class="a in" style="left:791px;top:485px;width:125px;height:20px;background:#fff;"></div>
<div class="a in" style="left:791px;top:511px;width:125px;height:20px;background:#fff;"></div>
<div class="a in" style="left:791px;top:537px;width:125px;height:20px;background:#fff;"></div>
<div class="a in" style="left:791px;top:560px;width:125px;height:20px;background:#fff;"></div>
<div class="a in" style="left:791px;top:585px;width:125px;height:20px;background:#fff;"></div>
<div class="a in" style="left:986px;top:335px;width:125px;height:20px;background:#fff;"></div>
<div class="t n" style="left:989px;top:338px;">10061</div>
<div class="a in" style="left:986px;top:360px;width:125px;height:20px;background:#fff;"></div>
<div class="a in" style="left:986px;top:385px;width:125px;height:19px;background:#fff;"></div>
<div class="a " style="left:986px;top:405px;width:126px;height:1px;background:#9b9b9b"></div>
<div class="t n" style="left:988px;top:389px;">1960-01-01</div>
<svg class="a" style="left:1084px;top:389px" width="12" height="13" viewBox="0 0 12 13"><rect x=".5" y=".5" width="10" height="11" rx="1.500" fill="#e8e8f0" stroke="#7a6a60"/><path d="M2 12.300h9.500V2.500" stroke="#b0a8a0" fill="none"/><rect x="2.500" y="3.500" width="6" height="6" fill="#fff" stroke="#8a96c0" stroke-width=".8"/><path d="M4.500 3.500v6M6.500 3.500v6M2.500 5.500h6M2.500 7.500h6" stroke="#8a96c0" stroke-width=".7"/></svg>
<svg class="a" style="left:1097px;top:393px" width="7" height="4" viewBox="0 0 7 4"><path d="M0 0h7L3.5 4z" fill="#4a6298"/></svg>
<div class="a " style="left:986px;top:409px;width:125px;height:19px;background:#fff;border-bottom:1px solid #d9dde6;box-sizing:border-box"></div>
<div class="a " style="left:988px;top:411px;width:104px;height:14px;background:#e6f6fc"></div>
<div class="a " style="left:1094px;top:409px;width:17px;height:19px;box-sizing:border-box;border:1px solid #9a9a9a;background:#f1f1f1"></div>
<svg class="a" style="left:1099px;top:417px" width="7" height="4" viewBox="0 0 7 4"><path d="M0 0h7L3.5 4z" fill="#000"/></svg>
<div class="t" style="left:989px;top:413px;">群众</div>
<div class="a in" style="left:986px;top:485px;width:125px;height:20px;background:#fff;"></div>
<div class="t" style="left:990px;top:490px;">和贵峰</div>
<div class="a in" style="left:986px;top:511px;width:125px;height:20px;background:#fff;"></div>
<div class="a in" style="left:986px;top:537px;width:125px;height:20px;background:#fff;"></div>
<div class="a in" style="left:986px;top:560px;width:125px;height:20px;background:#fff;"></div>
<div class="a in" style="left:986px;top:585px;width:125px;height:20px;background:#fff;"></div>
<div class="a " style="left:1184px;top:335px;width:125px;height:19px;background:#fff;border-bottom:1px solid #d9dde6;box-sizing:border-box"></div>
<div class="a " style="left:1186px;top:337px;width:104px;height:14px;background:#e6f6fc"></div>
<div class="a " style="left:1292px;top:335px;width:17px;height:19px;box-sizing:border-box;border:1px solid #9a9a9a;background:#f1f1f1"></div>
<svg class="a" style="left:1297px;top:343px" width="7" height="4" viewBox="0 0 7 4"><path d="M0 0h7L3.5 4z" fill="#000"/></svg>
<div class="t" style="left:1187px;top:339px;">本科</div>
<div class="a " style="left:1184px;top:360px;width:125px;height:19px;background:#fff;border-bottom:1px solid #d9dde6;box-sizing:border-box"></div>
<div class="a " style="left:1186px;top:362px;width:104px;height:14px;background:#e6f6fc"></div>
<div class="a " style="left:1292px;top:360px;width:17px;height:19px;box-sizing:border-box;border:1px solid #9a9a9a;background:#f1f1f1"></div>
<svg class="a" style="left:1297px;top:368px" width="7" height="4" viewBox="0 0 7 4"><path d="M0 0h7L3.5 4z" fill="#000"/></svg>
<div class="a in" style="left:1184px;top:385px;width:125px;height:20px;background:#fff;"></div>
<div class="a " style="left:1184px;top:409px;width:125px;height:19px;background:#fff;border-bottom:1px solid #d9dde6;box-sizing:border-box"></div>
<div class="a " style="left:1292px;top:409px;width:17px;height:19px;box-sizing:border-box;border:1px solid #9a9a9a;background:#f1f1f1"></div>
<svg class="a" style="left:1297px;top:417px" width="7" height="4" viewBox="0 0 7 4"><path d="M0 0h7L3.5 4z" fill="#000"/></svg>
<div class="a in" style="left:1184px;top:436px;width:125px;height:19px;background:#fff;"></div>
<div class="a " style="left:1184px;top:456px;width:126px;height:1px;background:#9b9b9b"></div>
<svg class="a" style="left:1282px;top:440px" width="12" height="13" viewBox="0 0 12 13"><rect x=".5" y=".5" width="10" height="11" rx="1.500" fill="#e8e8f0" stroke="#7a6a60"/><path d="M2 12.300h9.500V2.500" stroke="#b0a8a0" fill="none"/><rect x="2.500" y="3.500" width="6" height="6" fill="#fff" stroke="#8a96c0" stroke-width=".8"/><path d="M4.500 3.500v6M6.500 3.500v6M2.500 5.500h6M2.500 7.500h6" stroke="#8a96c0" stroke-width=".7"/></svg>
<svg class="a" style="left:1295px;top:444px" width="7" height="4" viewBox="0 0 7 4"><path d="M0 0h7L3.5 4z" fill="#4a6298"/></svg>
<div class="a in" style="left:1184px;top:460px;width:125px;height:20px;background:#fff;"></div>
<div class="a " style="left:1184px;top:485px;width:125px;height:19px;background:#fff;border-bottom:1px solid #d9dde6;box-sizing:border-box"></div>
<div class="a " style="left:1186px;top:487px;width:104px;height:14px;background:#e6f6fc"></div>
<div class="a " style="left:1292px;top:485px;width:17px;height:19px;box-sizing:border-box;border:1px solid #9a9a9a;background:#f1f1f1"></div>
<svg class="a" style="left:1297px;top:493px" width="7" height="4" viewBox="0 0 7 4"><path d="M0 0h7L3.5 4z" fill="#000"/></svg>
<div class="t" style="left:1187px;top:489px;">合同制</div>
<div class="a " style="left:1184px;top:511px;width:125px;height:19px;background:#fff;border-bottom:1px solid #d9dde6;box-sizing:border-box"></div>
<div class="a " style="left:1186px;top:513px;width:104px;height:14px;background:#e6f6fc"></div>
<div class="a " style="left:1292px;top:511px;width:17px;height:19px;box-sizing:border-box;border:1px solid #9a9a9a;background:#f1f1f1"></div>
<svg class="a" style="left:1297px;top:519px" width="7" height="4" viewBox="0 0 7 4"><path d="M0 0h7L3.5 4z" fill="#000"/></svg>
<div class="t" style="left:1187px;top:515px;">程序员</div>
<div class="a " style="left:1184px;top:536px;width:125px;height:19px;background:#fff;border-bottom:1px solid #d9dde6;box-sizing:border-box"></div>
<div class="a " style="left:1186px;top:538px;width:104px;height:14px;background:#e6f6fc"></div>
<div class="a " style="left:1292px;top:536px;width:17px;height:19px;box-sizing:border-box;border:1px solid #9a9a9a;background:#f1f1f1"></div>
<svg class="a" style="left:1297px;top:544px" width="7" height="4" viewBox="0 0 7 4"><path d="M0 0h7L3.5 4z" fill="#000"/></svg>
<div class="t" style="left:1187px;top:540px;">总经理</div>
<div class="a " style="left:1184px;top:561px;width:125px;height:19px;background:#fff;border-bottom:1px solid #d9dde6;box-sizing:border-box"></div>
<div class="a " style="left:1186px;top:563px;width:104px;height:14px;background:#e6f6fc"></div>
<div class="a " style="left:1292px;top:561px;width:17px;height:19px;box-sizing:border-box;border:1px solid #9a9a9a;background:#f1f1f1"></div>
<svg class="a" style="left:1297px;top:569px" width="7" height="4" viewBox="0 0 7 4"><path d="M0 0h7L3.5 4z" fill="#000"/></svg>
<div class="t" style="left:1187px;top:565px;">技工</div>
<div class="a in" style="left:1184px;top:586px;width:125px;height:19px;background:#fff;"></div>
<div class="a " style="left:1184px;top:606px;width:126px;height:1px;background:#9b9b9b"></div>
<div class="t n" style="left:1186px;top:590px;">2005-10-13</div>
<svg class="a" style="left:1282px;top:590px" width="12" height="13" viewBox="0 0 12 13"><rect x=".5" y=".5" width="10" height="11" rx="1.500" fill="#e8e8f0" stroke="#7a6a60"/><path d="M2 12.300h9.500V2.500" stroke="#b0a8a0" fill="none"/><rect x="2.500" y="3.500" width="6" height="6" fill="#fff" stroke="#8a96c0" stroke-width=".8"/><path d="M4.500 3.500v6M6.500 3.500v6M2.500 5.500h6M2.500 7.500h6" stroke="#8a96c0" stroke-width=".7"/></svg>
<svg class="a" style="left:1295px;top:594px" width="7" height="4" viewBox="0 0 7 4"><path d="M0 0h7L3.5 4z" fill="#4a6298"/></svg>
<div class="a " style="left:1328px;top:338px;width:179px;height:142px;background:#fff"></div>
<div class="t" style="left:1321px;top:491px;color:#2a2a2a;">入职日</div>
<div class="a in" style="left:1378px;top:486px;width:125px;height:19px;background:#fff;"></div>
<div class="a " style="left:1378px;top:506px;width:126px;height:1px;background:#9b9b9b"></div>
<div class="t n" style="left:1380px;top:490px;">2005-10-13</div>
<svg class="a" style="left:1476px;top:490px" width="12" height="13" viewBox="0 0 12 13"><rect x=".5" y=".5" width="10" height="11" rx="1.500" fill="#e8e8f0" stroke="#7a6a60"/><path d="M2 12.300h9.500V2.500" stroke="#b0a8a0" fill="none"/><rect x="2.500" y="3.500" width="6" height="6" fill="#fff" stroke="#8a96c0" stroke-width=".8"/><path d="M4.500 3.500v6M6.500 3.500v6M2.500 5.500h6M2.500 7.500h6" stroke="#8a96c0" stroke-width=".7"/></svg>
<svg class="a" style="left:1489px;top:494px" width="7" height="4" viewBox="0 0 7 4"><path d="M0 0h7L3.5 4z" fill="#4a6298"/></svg>
<div class="t" style="left:1321px;top:517px;color:#2a2a2a;">上岗日</div>
<div class="a in" style="left:1378px;top:512px;width:125px;height:19px;background:#fff;"></div>
<div class="a " style="left:1378px;top:532px;width:126px;height:1px;background:#9b9b9b"></div>
<div class="t n" style="left:1380px;top:516px;">2005-10-13</div>
<svg class="a" style="left:1476px;top:516px" width="12" height="13" viewBox="0 0 12 13"><rect x=".5" y=".5" width="10" height="11" rx="1.500" fill="#e8e8f0" stroke="#7a6a60"/><path d="M2 12.300h9.500V2.500" stroke="#b0a8a0" fill="none"/><rect x="2.500" y="3.500" width="6" height="6" fill="#fff" stroke="#8a96c0" stroke-width=".8"/><path d="M4.500 3.500v6M6.500 3.500v6M2.500 5.500h6M2.500 7.500h6" stroke="#8a96c0" stroke-width=".7"/></svg>
<svg class="a" style="left:1489px;top:520px" width="7" height="4" viewBox="0 0 7 4"><path d="M0 0h7L3.5 4z" fill="#4a6298"/></svg>
<div class="t" style="left:1321px;top:542px;color:#2a2a2a;">工作日</div>
<div class="a in" style="left:1378px;top:537px;width:125px;height:19px;background:#fff;"></div>
<div class="a " style="left:1378px;top:557px;width:126px;height:1px;background:#9b9b9b"></div>
<div class="t n" style="left:1380px;top:541px;">2005-10-13</div>
<svg class="a" style="left:1476px;top:541px" width="12" height="13" viewBox="0 0 12 13"><rect x=".5" y=".5" width="10" height="11" rx="1.500" fill="#e8e8f0" stroke="#7a6a60"/><path d="M2 12.300h9.500V2.500" stroke="#b0a8a0" fill="none"/><rect x="2.500" y="3.500" width="6" height="6" fill="#fff" stroke="#8a96c0" stroke-width=".8"/><path d="M4.500 3.500v6M6.500 3.500v6M2.500 5.500h6M2.500 7.500h6" stroke="#8a96c0" stroke-width=".7"/></svg>
<svg class="a" style="left:1489px;top:545px" width="7" height="4" viewBox="0 0 7 4"><path d="M0 0h7L3.5 4z" fill="#4a6298"/></svg>
<div class="t" style="left:1321px;top:567px;color:#2a2a2a;">职称日</div>
<div class="a in" style="left:1378px;top:562px;width:125px;height:19px;background:#fff;"></div>
<div class="a " style="left:1378px;top:582px;width:126px;height:1px;background:#9b9b9b"></div>
<div class="t n" style="left:1380px;top:566px;">1995-10-13</div>
<svg class="a" style="left:1476px;top:566px" width="12" height="13" viewBox="0 0 12 13"><rect x=".5" y=".5" width="10" height="11" rx="1.500" fill="#e8e8f0" stroke="#7a6a60"/><path d="M2 12.300h9.500V2.500" stroke="#b0a8a0" fill="none"/><rect x="2.500" y="3.500" width="6" height="6" fill="#fff" stroke="#8a96c0" stroke-width=".8"/><path d="M4.500 3.500v6M6.500 3.500v6M2.500 5.500h6M2.500 7.500h6" stroke="#8a96c0" stroke-width=".7"/></svg>
<svg class="a" style="left:1489px;top:570px" width="7" height="4" viewBox="0 0 7 4"><path d="M0 0h7L3.5 4z" fill="#4a6298"/></svg>
<div class="t" style="left:1321px;top:592px;color:#2a2a2a;">合同终</div>
<div class="a in" style="left:1378px;top:587px;width:125px;height:19px;background:#fff;"></div>
<div class="a " style="left:1378px;top:607px;width:126px;height:1px;background:#9b9b9b"></div>
<div class="t n" style="left:1380px;top:591px;">2010-10-13</div>
<svg class="a" style="left:1476px;top:591px" width="12" height="13" viewBox="0 0 12 13"><rect x=".5" y=".5" width="10" height="11" rx="1.500" fill="#e8e8f0" stroke="#7a6a60"/><path d="M2 12.300h9.500V2.500" stroke="#b0a8a0" fill="none"/><rect x="2.500" y="3.500" width="6" height="6" fill="#fff" stroke="#8a96c0" stroke-width=".8"/><path d="M4.500 3.500v6M6.500 3.500v6M2.500 5.500h6M2.500 7.500h6" stroke="#8a96c0" stroke-width=".7"/></svg>
<svg class="a" style="left:1489px;top:595px" width="7" height="4" viewBox="0 0 7 4"><path d="M0 0h7L3.5 4z" fill="#4a6298"/></svg>
<svg class="a" style="left:0;top:0" width="1536" height="600" viewBox="0 0 1536 600"><path d="M500 487 L765 288 L762 284.4 L779.8 280 L771.2 296.200 L769.4 293.700 L501.500 488.500z" fill="#f23a3a"/></svg>
<div class="a bd" style="left:796px;top:229px">2</div>
</body></html>
